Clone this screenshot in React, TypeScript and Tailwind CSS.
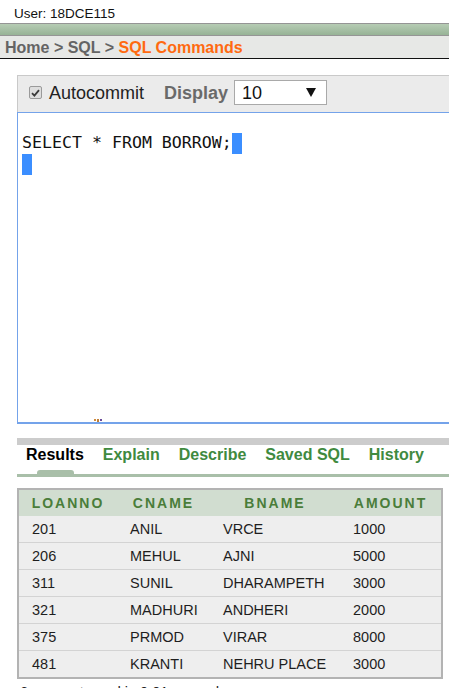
import React from 'react';

const ROWS: [string, string, string, string][] = [
  ['201', 'ANIL', 'VRCE', '1000'],
  ['206', 'MEHUL', 'AJNI', '5000'],
  ['311', 'SUNIL', 'DHARAMPETH', '3000'],
  ['321', 'MADHURI', 'ANDHERI', '2000'],
  ['375', 'PRMOD', 'VIRAR', '8000'],
  ['481', 'KRANTI', 'NEHRU PLACE', '3000'],
];

const HEADERS = ['LOANNO', 'CNAME', 'BNAME', 'AMOUNT'];
const TABS = ['Explain', 'Describe', 'Saved SQL', 'History'];

function Toolbar() {
  return (
    <div className="flex items-center h-[37px] pl-[11px] pt-[1px] pb-[4px] bg-[#ebebeb] border-t border-l border-[#c9c9c9]">
      <span className="flex items-center justify-center w-[13px] h-[13px] rounded-[2px] border border-[#9a9a9a] bg-[#dedede]">
        <svg width="9" height="8" viewBox="0 0 9 8">
          <path d="M1 4.2 L3.4 6.6 L8 1.2" fill="none" stroke="#3a3a3a" strokeWidth="1.8" />
        </svg>
      </span>
      <span className="ml-[7px] text-[18px] leading-[20px] text-[#222]">Autocommit</span>
      <span className="ml-[20px] text-[18px] leading-[20px] font-bold text-[#6a6a6a]">Display</span>
      <div className="ml-[6px] flex items-center justify-between w-[93px] h-[25px] pl-[7px] pr-[10px] bg-white border border-[#a9a9a9]">
        <span className="text-[18px] leading-[20px] text-[#111]">10</span>
        <svg width="10" height="9" viewBox="0 0 10 9">
          <path d="M0 0 H10 L5 9 Z" fill="#111" />
        </svg>
      </div>
    </div>
  );
}

function Editor() {
  return (
    <div className="relative h-[312px] border-t border-l border-b-2 border-[#74a3ea] pt-[19px] pl-[4px] font-['DejaVu_Sans_Mono','Liberation_Mono',monospace] text-[16.6px] leading-[22px] text-[#111]">
      <div className="flex items-center">
        <span>SELECT * FROM BORROW;</span>
        <span className="inline-block w-[10px] h-[21px] bg-[#3b8eff]" />
      </div>
      <div className="flex items-center">
        <span className="inline-block w-[10px] h-[21px] bg-[#3b8eff]" />
      </div>
      {/* resize grip */}
      <div className="absolute left-[76px] bottom-[0px] flex gap-[1px]">
        <span className="w-[2px] h-[2px] bg-[#d08a3a]" />
        <span className="w-[2px] h-[3px] bg-[#c0803a]" />
        <span className="w-[2px] h-[2px] bg-[#6a4a9a]" />
      </div>
    </div>
  );
}

function Tabs() {
  return (
    <div className="mt-[14px]">
      <div className="h-[7px] bg-[#cccccc]" />
      <div className="relative flex h-[29px] pl-[9px] pt-[1px] gap-[19px] text-[16px] leading-[18px] font-bold">
        <span className="text-black">Results</span>
        {TABS.map((t) => (
          <span key={t} className="text-[#3f8a3f]">
            {t}
          </span>
        ))}
        <span className="absolute left-[20px] bottom-0 w-[37px] h-[4px] rounded-t-[3px] bg-[#a9bfa9]" />
      </div>
      <div className="h-[3px] bg-[#a9bfa9]" />
    </div>
  );
}

function ResultTable() {
  const cols = 'grid grid-cols-[98px_93px_130px_101px]';
  return (
    <div className="mt-[11px] w-[426px] border-2 border-[#b3b3b3]">
      <div className={`${cols} h-[26px] bg-[#d1ddd0]`}>
        {HEADERS.map((h) => (
          <div
            key={h}
            className="flex items-center justify-center text-[14px] font-bold tracking-[2px] text-[#4a7d3a]"
          >
            {h}
          </div>
        ))}
      </div>
      {ROWS.map((r, i) => (
        <div
          key={r[0]}
          className={`${cols} bg-[#eeeeee] ${i === 0 ? 'h-[26px] pt-[1px]' : 'h-[27px] pt-[1px] border-t border-[#d3d3d3]'}`}
        >
          {r.map((c, j) => (
            <div key={j} className="flex items-center pl-[13px] text-[14.5px] text-[#1e1e1e]">
              {c}
            </div>
          ))}
        </div>
      ))}
    </div>
  );
}

export default function App() {
  return (
    <div className="w-[449px] h-[688px] overflow-hidden bg-white font-['Liberation_Sans',Arial,sans-serif]">
      <div className="h-[23px] pl-[14px] pt-[6px] text-[13.5px] leading-[16px] text-[#111]">User: 18DCE115</div>
      <div className="h-[13px] border-t border-b border-[#959595] bg-gradient-to-b from-[#b6ccb4] to-[#97b396]" />
      <div className="h-[23px] flex items-center pl-[5px] pt-[2px] bg-[#e7e8e6] border-b border-[#111] text-[16px] font-bold">
        <span className="text-[#646464]">Home &gt; SQL &gt;&nbsp;</span>
        <span className="text-[#ff6a10]">SQL Commands</span>
      </div>

      <div className="pl-[17px] pt-[16px]">
        <Toolbar />
        <Editor />
        <Tabs />
        <ResultTable />
      </div>
      <div className="pl-[20px] pt-[3px] text-[14.5px] text-[#222]">6 rows returned in 0.01 seconds</div>
    </div>
  );
}
